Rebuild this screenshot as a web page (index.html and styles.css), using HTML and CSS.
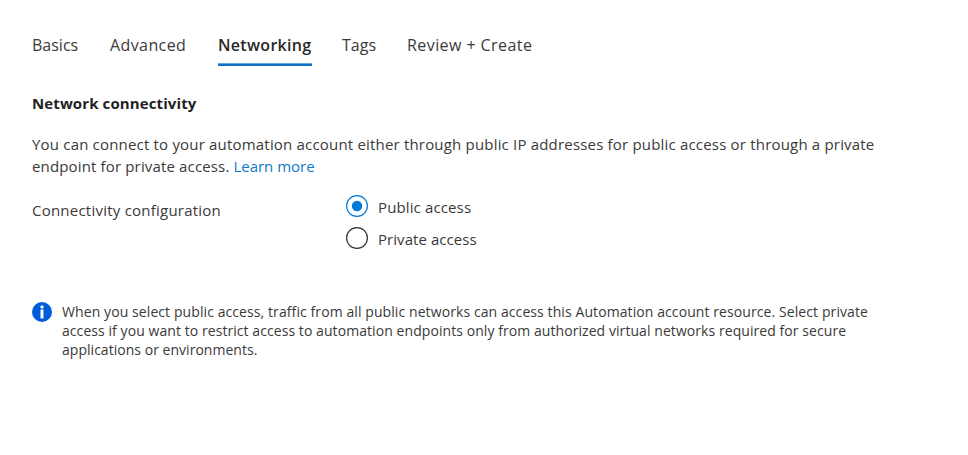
FILE: index.html
```html
<!DOCTYPE html>
<html lang="en">
<head>
<meta charset="utf-8">
<title>Create an Automation Account</title>
<link rel="stylesheet" href="styles.css">
</head>
<body>
<nav class="tabs">
  <a class="tab t1"><span>Basics</span></a>
  <a class="tab t2"><span>Advanced</span></a>
  <a class="tab t3 active"><span>Networking</span></a>
  <a class="tab t4"><span>Tags</span></a>
  <a class="tab t5"><span>Review + Create</span></a>
</nav>
<main>
  <h2>Network connectivity</h2>
  <p class="intro"><span class="i1">You can connect to your automation account either through public IP addresses for public access or through a private</span><br><span class="i2">endpoint for private access.</span> <a class="i3">Learn more</a></p>
  <div class="field">
    <div class="label">Connectivity configuration</div>
    <div class="options">
      <div class="option"><svg width="24" height="24" viewBox="0 0 24 24"><circle cx="12" cy="12" r="10.4" fill="#fff" stroke="#0078d4" stroke-width="1.2"/><circle cx="12" cy="12" r="5.2" fill="#0078d4"/></svg><span class="o1">Public access</span></div>
      <div class="option"><svg width="24" height="24" viewBox="0 0 24 24"><circle cx="12" cy="12" r="10.4" fill="#fff" stroke="#323130" stroke-width="1.2"/></svg><span class="o2">Private access</span></div>
    </div>
  </div>
  <div class="info">
    <svg width="20" height="20" viewBox="0 0 20 20"><circle cx="10" cy="10" r="10" fill="#015cda"/><circle cx="10" cy="4.9" r="1.7" fill="#fff"/><rect x="8.5" y="7.6" width="3" height="9" rx=".5" fill="#fff"/></svg>
    <p><span class="n1">When you select public access, traffic from all public networks can access this Automation account resource. Select private</span><br><span class="n2">access if you want to restrict access to automation endpoints only from authorized virtual networks required for secure</span><br><span class="n3">applications or environments.</span></p>
  </div>
</main>
</body>
</html>
```
FILE: styles.css
```css
* { box-sizing: border-box; }
body { margin: 0; padding: 30px 32px; background: #fff; color: #3b3a39; font: 400 15px/22px "Open Sans", "Noto Sans", sans-serif; white-space: nowrap; }
h2, p { margin: 0; }
.tabs { display: flex; height: 36px; line-height: 30px; font-size: 16px; }
.tab { height: 36px; margin-right: 32px; }
.t1 { width: 46px; }
.t2 { width: 76px; letter-spacing: .4px; }
.t3 { width: 94px; margin-right: 30px; letter-spacing: .3px; }
.t4 { width: 33px; }
.t5 { letter-spacing: .43px; }
.active { background: linear-gradient(#5ea6df 1px, #1272c4 1px) bottom / 100% 3px no-repeat; font-weight: 600; color: #292827; }
h2 { margin-top: 26px; font-size: 15px; line-height: 22px; font-weight: 700; letter-spacing: .11px; color: #1f1f1f; }
.intro { margin-top: 19px; }
.i1 { letter-spacing: .187px; }
.i2 { letter-spacing: .15px; }
.intro a { color: #0f78c8; }
.field { display: flex; margin-top: 17px; }
.label { width: 313px; padding-top: 5px; letter-spacing: .23px; }
.option { display: flex; align-items: center; height: 24px; margin-bottom: 8px; }
.option span { margin-left: 9px; padding-top: 2px; }
.o1 { letter-spacing: .13px; }
.o2 { letter-spacing: .06px; }
.info { display: flex; margin-top: 44px; font-size: 14px; line-height: 19px; }
.info p { margin-left: 10px; }
.n1 { letter-spacing: .088px; }
.n2 { letter-spacing: .067px; }
.n3 { letter-spacing: .03px; }
```
